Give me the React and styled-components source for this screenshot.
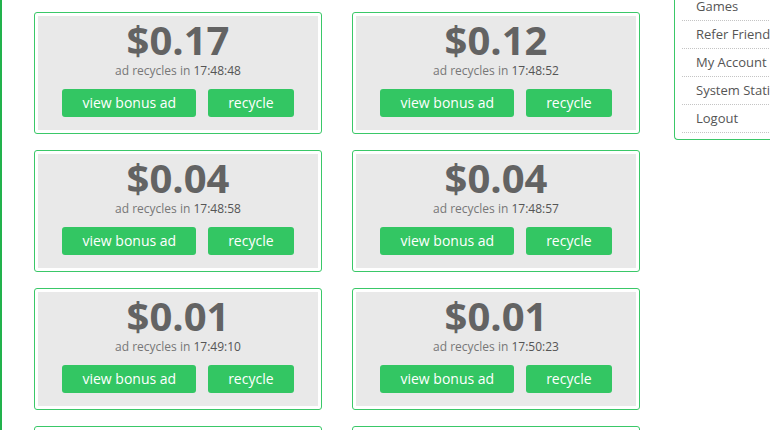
import React from 'react'
import styled, { createGlobalStyle } from 'styled-components'

const Global = createGlobalStyle`
  html, body {
    margin: 0;
    padding: 0;
    overflow: hidden;
    background: #fff;
    font-family: "Open Sans", "Noto Sans", sans-serif;
  }
`

const Page = styled.div`
  display: flex;
  align-items: flex-start;
  width: 770px;
  height: 430px;
  overflow: hidden;
  border-left: 2px solid #22b24c;
  box-sizing: border-box;
`

const Main = styled.main`
  display: grid;
  grid-template-columns: repeat(2, 288px);
  column-gap: 30px;
  row-gap: 16px;
  padding: 12px 0 0 32px;
  flex-shrink: 0;
`

const Card = styled.div`
  height: 122px;
  box-sizing: border-box;
  border: 1px solid #3ac868;
  border-radius: 3px;
  padding: 3px;
  background: #fff;
`

const Inner = styled.div`
  height: 100%;
  background: #e9e9e9;
  display: flex;
  flex-direction: column;
  align-items: center;
  padding-top: 4px;
  box-sizing: border-box;
`

const Price = styled.div`
  font-size: 40px;
  line-height: 40px;
  font-weight: 700;
  color: #636363;
`

const Timer = styled.div`
  margin-top: 3px;
  font-size: 12px;
  line-height: 16px;
  color: #777;

  b {
    font-weight: 400;
    color: #555;
  }
`

const Actions = styled.div`
  display: flex;
  gap: 12px;
  margin-top: 10px;
`

const Button = styled.button`
  height: 28px;
  padding: 0 20px;
  border: none;
  border-radius: 3px;
  background: #33c663;
  color: #fff;
  font-family: inherit;
  font-size: 14px;
  line-height: 28px;
  cursor: pointer;
`

const Side = styled.aside`
  flex-shrink: 0;
  width: 150px;
  margin-left: 34px;
  margin-top: -7px;
  border: 1px solid #3ac868;
  border-top: none;
  border-right: none;
  border-bottom-left-radius: 4px;
  padding-bottom: 6px;
`

const Menu = styled.ul`
  list-style: none;
  margin: 0;
  padding: 0;
`

const MenuItem = styled.li`
  margin-left: 7px;
  padding-left: 14px;
  height: 27px;
  line-height: 27px;
  font-size: 13px;
  color: #555;
  white-space: nowrap;
  border-bottom: 1px dotted #c4c4c4;
`

const ads = [
  { price: '$0.17', time: '17:48:48' },
  { price: '$0.12', time: '17:48:52' },
  { price: '$0.04', time: '17:48:58' },
  { price: '$0.04', time: '17:48:57' },
  { price: '$0.01', time: '17:49:10' },
  { price: '$0.01', time: '17:50:23' },
  { price: '$0.01', time: '17:51:04' },
  { price: '$0.01', time: '17:51:37' },
]

const links = ['Games', 'Refer Friends', 'My Account', 'System Statistics', 'Logout']

const App = () => {
  return (
    <>
      <Global />
      <Page>
        <Main>
          {ads.map((ad, i) => (
            <Card key={i}>
              <Inner>
                <Price>{ad.price}</Price>
                <Timer>ad recycles in <b>{ad.time}</b></Timer>
                <Actions>
                  <Button>view bonus ad</Button>
                  <Button>recycle</Button>
                </Actions>
              </Inner>
            </Card>
          ))}
        </Main>
        <Side>
          <Menu>
            {links.map(l => <MenuItem key={l}>{l}</MenuItem>)}
          </Menu>
        </Side>
      </Page>
    </>
  )
}

export default App
